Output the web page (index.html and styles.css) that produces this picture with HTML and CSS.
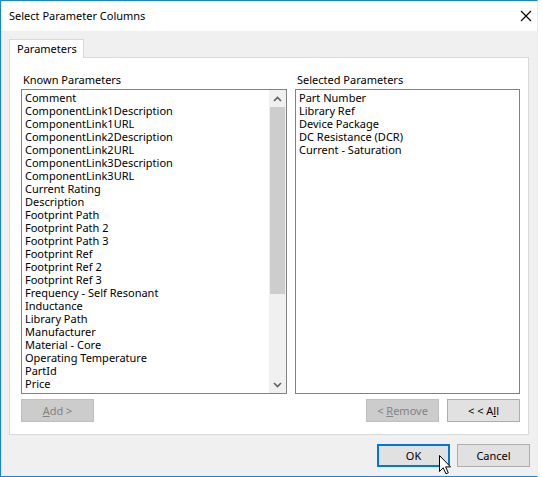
FILE: index.html
```html
<!DOCTYPE html>
<html>
<head>
<meta charset="utf-8">
<link rel="stylesheet" href="styles.css">
</head>
<body>
<div class="window">
  <div class="titlebar">
    <span class="title">Select Parameter Columns</span>
    <svg class="close" width="12" height="12" viewBox="0 0 12 12"><path d="M1 1 L11 11 M11 1 L1 11" stroke="#000" stroke-width="1.1" fill="none"/></svg>
  </div>
  <div class="body">
    <div class="tabs"><div class="tab">Parameters</div></div>
    <div class="panel">
      <div class="col col-left">
        <div class="label">Known Parameters</div>
        <div class="listbox">
          <ul class="items">
            <li>Comment</li>
            <li>ComponentLink1Description</li>
            <li>ComponentLink1URL</li>
            <li>ComponentLink2Description</li>
            <li>ComponentLink2URL</li>
            <li>ComponentLink3Description</li>
            <li>ComponentLink3URL</li>
            <li>Current Rating</li>
            <li>Description</li>
            <li>Footprint Path</li>
            <li>Footprint Path 2</li>
            <li>Footprint Path 3</li>
            <li>Footprint Ref</li>
            <li>Footprint Ref 2</li>
            <li>Footprint Ref 3</li>
            <li>Frequency - Self Resonant</li>
            <li>Inductance</li>
            <li>Library Path</li>
            <li>Manufacturer</li>
            <li>Material - Core</li>
            <li>Operating Temperature</li>
            <li>PartId</li>
            <li>Price</li>
          </ul>
          <div class="scrollbar">
            <div class="sb-btn"><svg width="9" height="6" viewBox="0 0 9 6"><path d="M1 5 L4.5 1.5 L8 5" stroke="#606060" stroke-width="1.6" fill="none"/></svg></div>
            <div class="sb-track"><div class="sb-thumb"></div></div>
            <div class="sb-btn"><svg width="9" height="6" viewBox="0 0 9 6"><path d="M1 1 L4.5 4.5 L8 1" stroke="#606060" stroke-width="1.6" fill="none"/></svg></div>
          </div>
        </div>
        <div class="btnrow btnrow-left">
          <div class="btn disabled"><span><u>A</u>dd &gt;</span></div>
        </div>
      </div>
      <div class="col col-right">
        <div class="label">Selected Parameters</div>
        <div class="listbox">
          <ul class="items">
            <li>Part Number</li>
            <li>Library Ref</li>
            <li>Device Package</li>
            <li>DC Resistance (DCR)</li>
            <li>Current - Saturation</li>
          </ul>
        </div>
        <div class="btnrow btnrow-right">
          <div class="btn disabled"><span>&lt; <u>R</u>emove</span></div>
          <div class="btn"><span>&lt; &lt; A<u>l</u>l</span></div>
        </div>
      </div>
    </div>
    <div class="footer">
      <div class="btn default"><span>OK</span></div>
      <div class="btn"><span>Cancel</span></div>
    </div>
  </div>
  <svg class="cursor" width="14" height="21" viewBox="0 0 14 21"><path d="M1.5 1.5 L1.5 17.5 L5.2 13.8 L8 19.8 L10.3 18.8 L7.6 12.9 L12.5 12.9 Z" fill="#fff" stroke="#000" stroke-width="1" stroke-linejoin="miter"/></svg>
</div>
</body>
</html>
```
FILE: styles.css
```css
* { box-sizing: border-box; }
html, body { margin: 0; padding: 0; background: #ffffff; }
body {
  font-family: "Noto Sans", "Open Sans", sans-serif;
  font-size: 11px;
  color: #000;
}
.window {
  position: relative;
  width: 538px;
  height: 477px;
  border-top: 1px solid #1883d7;
  border-left: 1px solid #1883d7;
  border-bottom: 1px solid #1883d7;
  border-right: 1px solid #ececec;
  display: flex;
  flex-direction: column;
}
.titlebar {
  height: 30px;
  background: #fff;
  display: flex;
  align-items: center;
  justify-content: space-between;
  padding: 0 5px 0 8px;
}
.title { font-size: 11px; line-height: 30px; }
.close { margin-top: -1px; }
.body {
  flex: 1;
  background: #f0f0f0;
  padding: 8px 8px 0 8px;
  display: flex;
  flex-direction: column;
}
.tabs { display: flex; position: relative; z-index: 1; }
.tab {
  width: 75px;
  height: 19px;
  background: #fff;
  border: 1px solid #d9d9d9;
  border-bottom: none;
  padding-left: 7px;
  line-height: 18px;
  margin-bottom: -1px;
}
.panel {
  height: 378px;
  background: #fff;
  border: 1px solid #d9d9d9;
  padding: 15px 8px 12px 11px;
  display: flex;
  gap: 8px;
}
.col { display: flex; flex-direction: column; }
.col-left { width: 266px; }
.col-right { width: 225px; }
.label { height: 16px; line-height: 13px; padding-left: 2px; }
.listbox {
  height: 305px;
  border: 1px solid #828282;
  display: flex;
  background: #fff;
}
.items {
  list-style: none;
  margin: 0;
  padding: 1px 0 0 3px;
  flex: 1;
}
.items li { height: 13px; line-height: 13px; white-space: nowrap; }
.scrollbar {
  width: 17px;
  background: #f0f0f0;
  display: flex;
  flex-direction: column;
}
.sb-btn {
  height: 17px;
  display: flex;
  align-items: center;
  justify-content: center;
}
.sb-track { flex: 1; padding: 0 1px; }
.sb-thumb { height: 187px; background: #cdcdcd; }
.btnrow { display: flex; gap: 8px; margin-top: 5px; }
.btnrow-right { justify-content: flex-end; }
.btn {
  width: 73px;
  height: 23px;
  background: #e1e1e1;
  border: 1px solid #adadad;
  display: flex;
  align-items: center;
  justify-content: center;
  line-height: 13px;
  white-space: pre;
}
.btn.disabled {
  background: #cccccc;
  border-color: #bfbfbf;
  color: #838383;
}
.btn.default { border: 2px solid #0078d7; }
.footer {
  display: flex;
  justify-content: flex-end;
  gap: 7px;
  margin-top: 9px;
  margin-right: -1px;
}
.cursor { position: absolute; left: 437px; top: 453px; }
```
